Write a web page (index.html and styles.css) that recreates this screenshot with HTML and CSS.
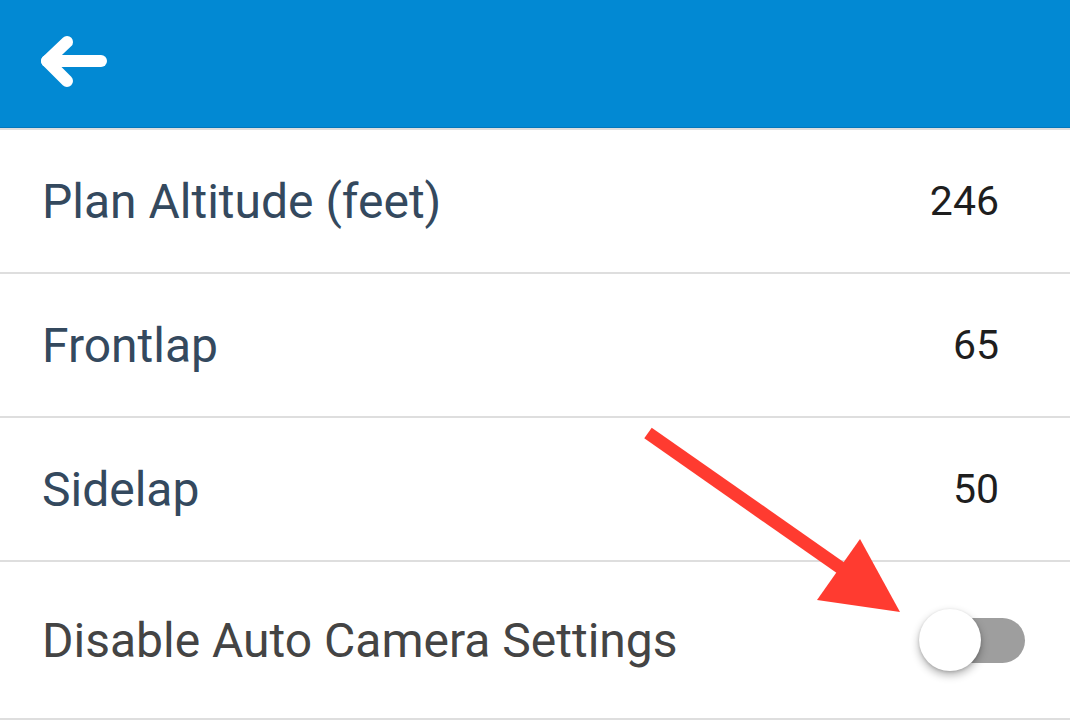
FILE: index.html
```html
<!DOCTYPE html>
<html>
<head>
<meta charset="utf-8">
<link rel="stylesheet" href="styles.css">
</head>
<body>
<div class="page">
  <header class="appbar">
    <svg class="back" width="80" height="64" viewBox="0 0 80 64">
      <polyline points="27,12 7,31 27,51" />
      <line x1="7" y1="31" x2="61" y2="31" />
    </svg>
  </header>
  <ul class="list">
    <li class="row"><span class="label">Plan Altitude (feet)</span><span class="value">246</span></li>
    <li class="row"><span class="label">Frontlap</span><span class="value">65</span></li>
    <li class="row"><span class="label">Sidelap</span><span class="value">50</span></li>
    <li class="row row-toggle"><span class="label label-gray">Disable Auto Camera Settings</span>
      <span class="switch"><span class="track"></span><span class="knob"></span></span>
    </li>
  </ul>
  <svg class="annot" width="1070" height="725" viewBox="0 0 1070 725">
    <line x1="648" y1="433" x2="848" y2="573" stroke="#ff3b30" stroke-width="13" />
    <polygon points="860,539 817,600 900,612" fill="#ff3b30" />
  </svg>
</div>
</body>
</html>
```
FILE: styles.css
```css
html, body {
  margin: 0;
  padding: 0;
  background: #fff;
}
.page {
  position: relative;
  width: 1070px;
  height: 725px;
  overflow: hidden;
  font-family: Roboto, "Noto Sans", sans-serif;
}
.appbar {
  height: 127px;
  background: #0289d3;
  border-bottom: 1px solid #0277bd;
  display: flex;
  align-items: flex-start;
  padding-left: 40px;
}
.back {
  margin-top: 30px;
  fill: none;
  stroke: #fff;
  stroke-width: 12;
  stroke-linecap: round;
  stroke-linejoin: round;
}
.list {
  list-style: none;
  margin: 0;
  padding: 0;
  border-top: 2px solid #dedede;
}
.row {
  height: 142px;
  border-bottom: 2px solid #dedede;
  display: flex;
  align-items: center;
  justify-content: space-between;
  padding: 0 71px 0 42px;
}
.row-toggle {
  height: 156px;
  padding-right: 45px;
}
.label {
  font-size: 48px;
  color: #34495e;
}
.label-gray {
  color: #444;
}
.value {
  font-size: 41px;
  color: #1e1e1e;
}
.switch {
  position: relative;
  width: 106px;
  height: 64px;
  display: flex;
  align-items: center;
}
.track {
  margin-left: 14px;
  width: 92px;
  height: 45px;
  border-radius: 23px;
  background: #9e9e9e;
}
.knob {
  position: absolute;
  left: 0;
  top: 1px;
  width: 62px;
  height: 62px;
  border-radius: 50%;
  background: #fff;
  box-shadow: 0 4px 8px rgba(0,0,0,0.3), 0 1px 3px rgba(0,0,0,0.15);
}
.annot {
  position: absolute;
  left: 0;
  top: 0;
  pointer-events: none;
}
```
